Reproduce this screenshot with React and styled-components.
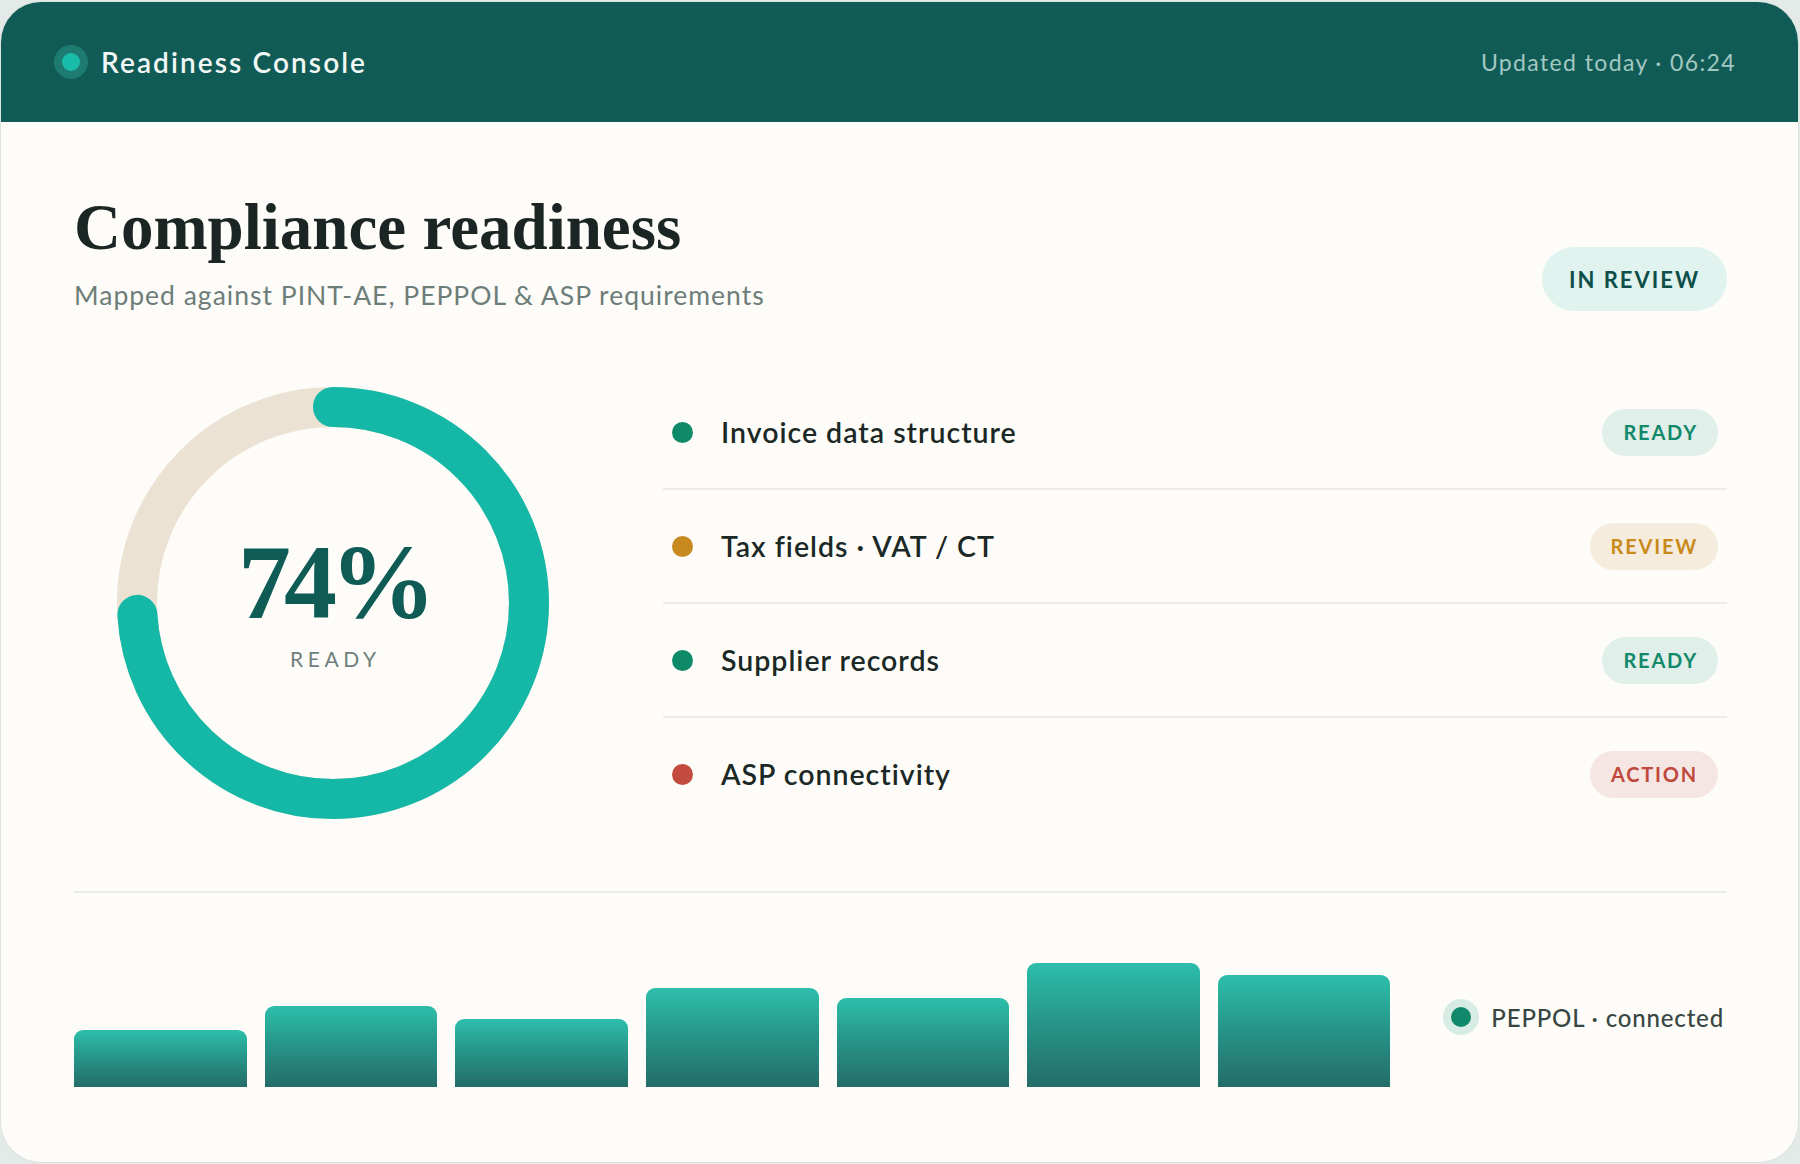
import React from "react";
import styled, { createGlobalStyle } from "styled-components";

const GlobalStyle = createGlobalStyle`
  html, body {
    margin: 0;
    padding: 0;
    background: #e3eae8;
  }
  * { box-sizing: border-box; }
`;

const SANS = `Lato, "Noto Sans", Inter, sans-serif`;
const SERIF = `"Liberation Serif", "DejaVu Serif", serif`;

const Page = styled.div`
  padding: 2px 2px 2px 1px;
`;

const Card = styled.div`
  height: 1160px;
  background: #fdfcf8;
  border-radius: 40px;
  overflow: hidden;
  box-shadow: 0 0 0 1px #dbe3e1;
  display: flex;
  flex-direction: column;
`;

const Header = styled.header`
  height: 120px;
  flex: none;
  background: #105b56;
  display: flex;
  align-items: center;
  justify-content: space-between;
  padding: 0 62px 0 53px;
`;

const Brand = styled.div`
  display: flex;
  align-items: center;
  gap: 13px;
  font-family: ${SANS};
  font-size: 28px;
  font-weight: 600;
  letter-spacing: 2.1px;
  color: #f1f7f5;
`;

const Pulse = styled.span`
  width: 34px;
  height: 34px;
  border-radius: 50%;
  background: #1d7b71;
  display: grid;
  place-items: center;
  &::after {
    content: "";
    width: 18px;
    height: 18px;
    border-radius: 50%;
    background: #19bca8;
  }
`;

const Stamp = styled.div`
  font-family: ${SANS};
  font-size: 23px;
  letter-spacing: 0.06em;
  color: #a3c8c1;
`;

const Body = styled.main`
  flex: 1;
  display: flex;
  flex-direction: column;
  padding: 71px 71px 0 73px;
`;

const TitleRow = styled.div`
  display: flex;
  align-items: flex-end;
  justify-content: space-between;
`;

const Title = styled.h1`
  margin: 0;
  font-family: ${SERIF};
  font-size: 65px;
  line-height: 68px;
  font-weight: 700;
  letter-spacing: 0;
  color: #1b2523;
`;

const Subtitle = styled.p`
  margin: 19px 0 0;
  font-family: ${SANS};
  font-size: 26.5px;
  line-height: 31px;
  letter-spacing: 1px;
  color: #6d7d79;
`;

const StatusPill = styled.div`
  height: 64px;
  padding: 0 27px;
  margin-bottom: 0;
  border-radius: 32px;
  background: #e0f3ef;
  display: flex;
  align-items: center;
  font-family: ${SANS};
  font-size: 22px;
  font-weight: 700;
  letter-spacing: 0.09em;
  color: #0f4f4a;
`;

const Main = styled.section`
  margin-top: 65px;
  display: grid;
  grid-template-columns: 518px 1fr;
  column-gap: 71px;
  align-items: center;
`;

const RingWrap = styled.div`
  justify-self: center;
  width: 432px;
  height: 432px;
  display: grid;
  place-items: center;
  & > * {
    grid-area: 1 / 1;
  }
`;

const RingCenter = styled.div`
  display: flex;
  flex-direction: column;
  align-items: center;
  padding-bottom: 7px;
`;

const Percent = styled.div`
  font-family: ${SERIF};
  font-size: 106px;
  line-height: 1;
  font-weight: 700;
  letter-spacing: -7px;
  padding-left: 7px;
  margin-right: 6px;
  color: #0f5c56;
`;

const RingLabel = styled.div`
  margin-top: 12px;
  font-family: ${SANS};
  font-size: 21px;
  line-height: 1;
  letter-spacing: 0.22em;
  padding-left: 0.22em;
  color: #6f7f7b;
`;

const List = styled.ul`
  list-style: none;
  margin: 0;
  padding: 0;
`;

const Row = styled.li`
  height: 114px;
  display: flex;
  align-items: center;
  padding: 0 9px;
  border-bottom: 2px solid #ecebe6;
  &:last-child {
    border-bottom: none;
    height: 112px;
  }
`;

const tones = {
  ready: { dot: "#0f8a68", fg: "#11896a", bg: "#e1efea" },
  review: { dot: "#c88a20", fg: "#c98a1c", bg: "#f5ecdd" },
  action: { dot: "#c24a3e", fg: "#c0473b", bg: "#f6e6e3" },
};

const Dot = styled.span`
  width: 21px;
  height: 21px;
  flex: none;
  border-radius: 50%;
  background: ${(p) => tones[p.$tone].dot};
`;

const RowText = styled.span`
  flex: 1;
  margin-left: 28px;
  font-family: ${SANS};
  font-size: 28.5px;
  font-weight: 600;
  letter-spacing: 0.035em;
  color: #1b2826;
`;

const Badge = styled.span`
  height: 47px;
  padding: 0 20px 0 21px;
  border-radius: 24px;
  display: flex;
  align-items: center;
  font-family: ${SANS};
  font-size: 20px;
  font-weight: 700;
  letter-spacing: 0.09em;
  color: ${(p) => tones[p.$tone].fg};
  background: ${(p) => tones[p.$tone].bg};
`;

const Divider = styled.hr`
  margin: 61px 0 0;
  border: none;
  height: 2px;
  background: #ebebe7;
`;

const Footer = styled.section`
  margin-top: 54px;
  display: flex;
  align-items: center;
  gap: 53px;
`;

const Bars = styled.div`
  flex: 1;
  height: 140px;
  display: flex;
  align-items: flex-end;
  gap: 18px;
`;

const Bar = styled.div`
  flex: 1;
  border-radius: 9px 9px 0 0;
  background: linear-gradient(180deg, #2dbeab 0%, #27978b 45%, #246c68 100%);
`;

const Legend = styled.div`
  display: flex;
  align-items: center;
  gap: 12px;
  padding-right: 3px;
  font-family: ${SANS};
  font-size: 24px;
  font-weight: 500;
  letter-spacing: 0.035em;
  color: #384643;
`;

const LegendDot = styled.span`
  width: 36px;
  height: 36px;
  border-radius: 50%;
  background: #d8ece6;
  display: grid;
  place-items: center;
  &::after {
    content: "";
    width: 20px;
    height: 20px;
    border-radius: 50%;
    background: #10896a;
  }
`;

function Ring({ value }) {
  const size = 432;
  const stroke = 40;
  const r = (size - stroke) / 2;
  const c = 2 * Math.PI * r;
  return (
    <svg width={size} height={size} viewBox={`0 0 ${size} ${size}`}>
      <circle cx={size / 2} cy={size / 2} r={r} fill="none" stroke="#ebe2d4" strokeWidth={stroke} />
      <circle
        cx={size / 2}
        cy={size / 2}
        r={r}
        fill="none"
        stroke="#15b8a6"
        strokeWidth={stroke}
        strokeLinecap="round"
        strokeDasharray={`${(c * value) / 100} ${c}`}
        transform={`rotate(-90 ${size / 2} ${size / 2})`}
      />
    </svg>
  );
}

const checks = [
  { label: "Invoice data structure", tone: "ready", status: "READY" },
  { label: "Tax fields · VAT / CT", tone: "review", status: "REVIEW" },
  { label: "Supplier records", tone: "ready", status: "READY" },
  { label: "ASP connectivity", tone: "action", status: "ACTION" },
];

const weekly = [46, 65, 55, 80, 72, 100, 90];

export default function App() {
  return (
    <Page>
      <GlobalStyle />
      <Card>
        <Header>
          <Brand>
            <Pulse />
            Readiness Console
          </Brand>
          <Stamp>Updated today · 06:24</Stamp>
        </Header>
        <Body>
          <TitleRow>
            <div>
              <Title>Compliance readiness</Title>
              <Subtitle>Mapped against PINT-AE, PEPPOL &amp; ASP requirements</Subtitle>
            </div>
            <StatusPill>IN REVIEW</StatusPill>
          </TitleRow>

          <Main>
            <RingWrap>
              <Ring value={74} />
              <RingCenter>
                <Percent>74%</Percent>
                <RingLabel>READY</RingLabel>
              </RingCenter>
            </RingWrap>
            <List>
              {checks.map((c) => (
                <Row key={c.label}>
                  <Dot $tone={c.tone} />
                  <RowText>{c.label}</RowText>
                  <Badge $tone={c.tone}>{c.status}</Badge>
                </Row>
              ))}
            </List>
          </Main>

          <Divider />

          <Footer>
            <Bars>
              {weekly.map((h, i) => (
                <Bar key={i} style={{ height: `${(h / 100) * 124}px` }} />
              ))}
            </Bars>
            <Legend>
              <LegendDot />
              PEPPOL · connected
            </Legend>
          </Footer>
        </Body>
      </Card>
    </Page>
  );
}
